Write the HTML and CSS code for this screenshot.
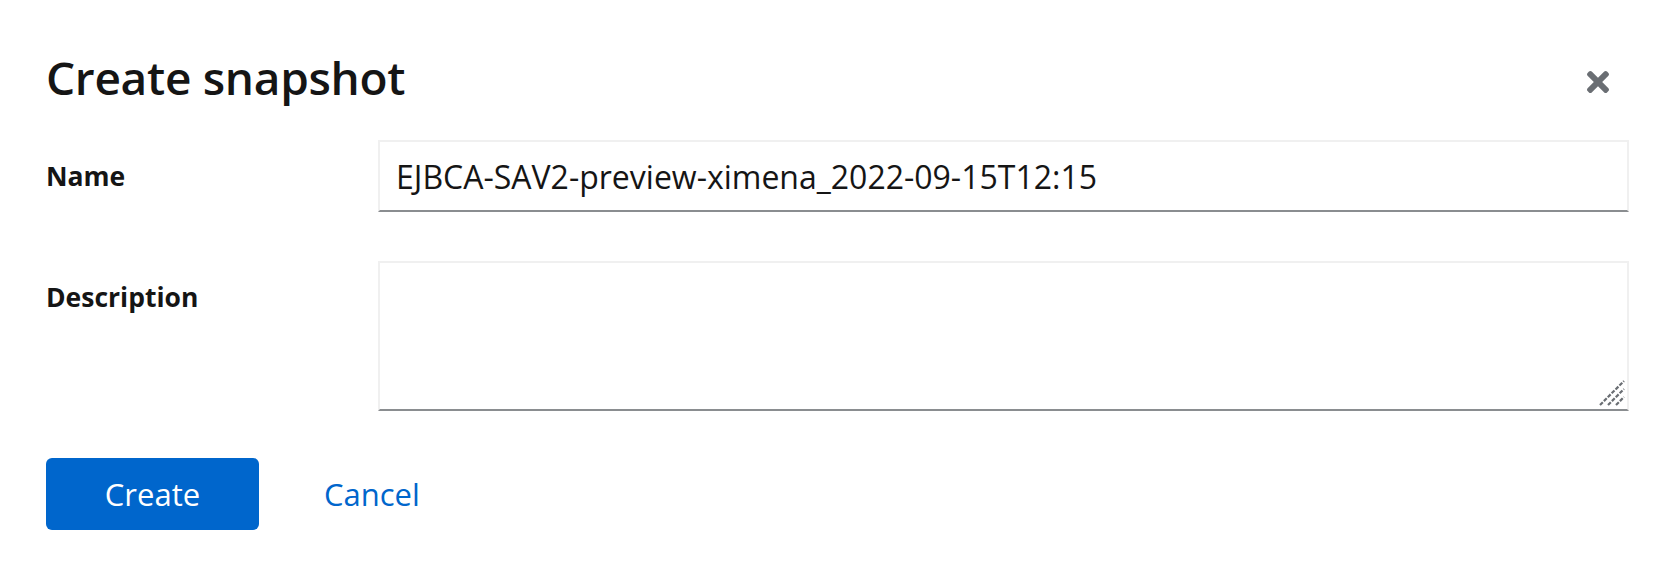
FILE: index.html
```html
<!DOCTYPE html>
<html lang="en">
<head>
<meta charset="utf-8">
<title>Create snapshot</title>
<link rel="stylesheet" href="styles.css">
</head>
<body>
<div class="modal">
  <header class="modal-header">
    <h1 class="modal-title">Create snapshot</h1>
    <button class="close-btn" type="button" aria-label="Close">
      <svg class="close-icon" viewBox="0 0 352 512" aria-hidden="true"><path d="M242.72 256l100.07-100.07c12.28-12.280 12.28-32.19 0-44.48l-22.24-22.24c-12.28-12.28-32.19-12.28-44.48 0L176 189.28 75.93 89.21c-12.28-12.28-32.19-12.28-44.48 0L9.21 111.45c-12.28 12.28-12.28 32.19 0 44.48L109.28 256 9.21 356.07c-12.28 12.28-12.28 32.19 0 44.48l22.24 22.24c12.28 12.28 32.2 12.28 44.48 0L176 322.72l100.07 100.07c12.28 12.28 32.2 12.28 44.48 0l22.24-22.24c12.28-12.28 12.28-32.19 0-44.48L242.72 256z"/></svg>
    </button>
  </header>
  <form class="form">
    <label class="form-label" for="name">Name</label>
    <input class="form-control" id="name" type="text" value="EJBCA-SAV2-preview-ximena_2022-09-15T12:15">
    <label class="form-label" for="desc">Description</label>
    <div class="textarea-wrap">
      <textarea class="form-control textarea" id="desc"></textarea>
      <svg class="resize-grip" viewBox="0 0 26 26" aria-hidden="true">
        <line x1="1" y1="25" x2="25" y2="1"/>
        <line x1="9" y1="25" x2="25" y2="9"/>
        <line x1="17" y1="25" x2="25" y2="17"/>
      </svg>
    </div>
  </form>
  <footer class="modal-footer">
    <button class="btn btn-primary" type="button">Create</button>
    <button class="btn btn-link" type="button">Cancel</button>
  </footer>
</div>
</body>
</html>
```
FILE: styles.css
```css
* { box-sizing: border-box; }
html, body { margin: 0; padding: 0; background: #fff; }
body {
  font-family: "Open Sans", "Liberation Sans", sans-serif;
  color: #151515;
}
.modal {
  padding: 46px 41px 0 46px;
}
.modal-header {
  display: flex;
  justify-content: space-between;
  align-items: flex-start;
}
.modal-title {
  margin: 0;
  font-size: 46px;
  line-height: 62px;
  font-weight: 600;
  letter-spacing: -0.3px;
  color: #151515;
}
.close-btn {
  border: 0;
  background: transparent;
  padding: 0;
  margin: 20px 20px 0 0;
  width: 22px;
  height: 32px;
  display: flex;
  cursor: pointer;
}
.close-icon {
  width: 22px;
  height: 32px;
  fill: #6a6e73;
}
.form {
  margin-top: 32px;
  display: grid;
  grid-template-columns: 332px 1fr;
  row-gap: 49px;
}
.form-label {
  font-size: 26.5px;
  line-height: 42px;
  font-weight: 700;
  padding-top: 15px;
  color: #151515;
}
.form-control {
  font-family: inherit;
  font-size: 32px;
  line-height: 68px;
  height: 72px;
  padding: 0 16px;
  border: 2px solid #f0f0f0;
  border-bottom-color: #8a8d90;
  color: #151515;
  background: #fff;
  outline: none;
  border-radius: 0;
  width: 100%;
}
.textarea-wrap {
  position: relative;
  height: 150px;
}
.textarea {
  display: block;
  height: 150px;
  resize: none;
  line-height: 1.5;
  padding: 10px 16px;
}
.resize-grip {
  position: absolute;
  right: 4px;
  bottom: 5px;
  width: 26px;
  height: 26px;
  stroke: #6a6e73;
  stroke-width: 2.2;
  stroke-dasharray: 4 1.5;
}
.modal-footer {
  margin-top: 47px;
  display: flex;
  align-items: center;
}
.btn {
  font-family: inherit;
  font-size: 31px;
  line-height: 48px;
  border: 0;
  cursor: pointer;
}
.btn-primary {
  width: 213px;
  height: 72px;
  background: #0066cc;
  color: #fff;
  border-radius: 6px;
}
.btn-link {
  margin-left: 33px;
  padding: 0 32px;
  height: 72px;
  background: transparent;
  color: #0066cc;
}
```
